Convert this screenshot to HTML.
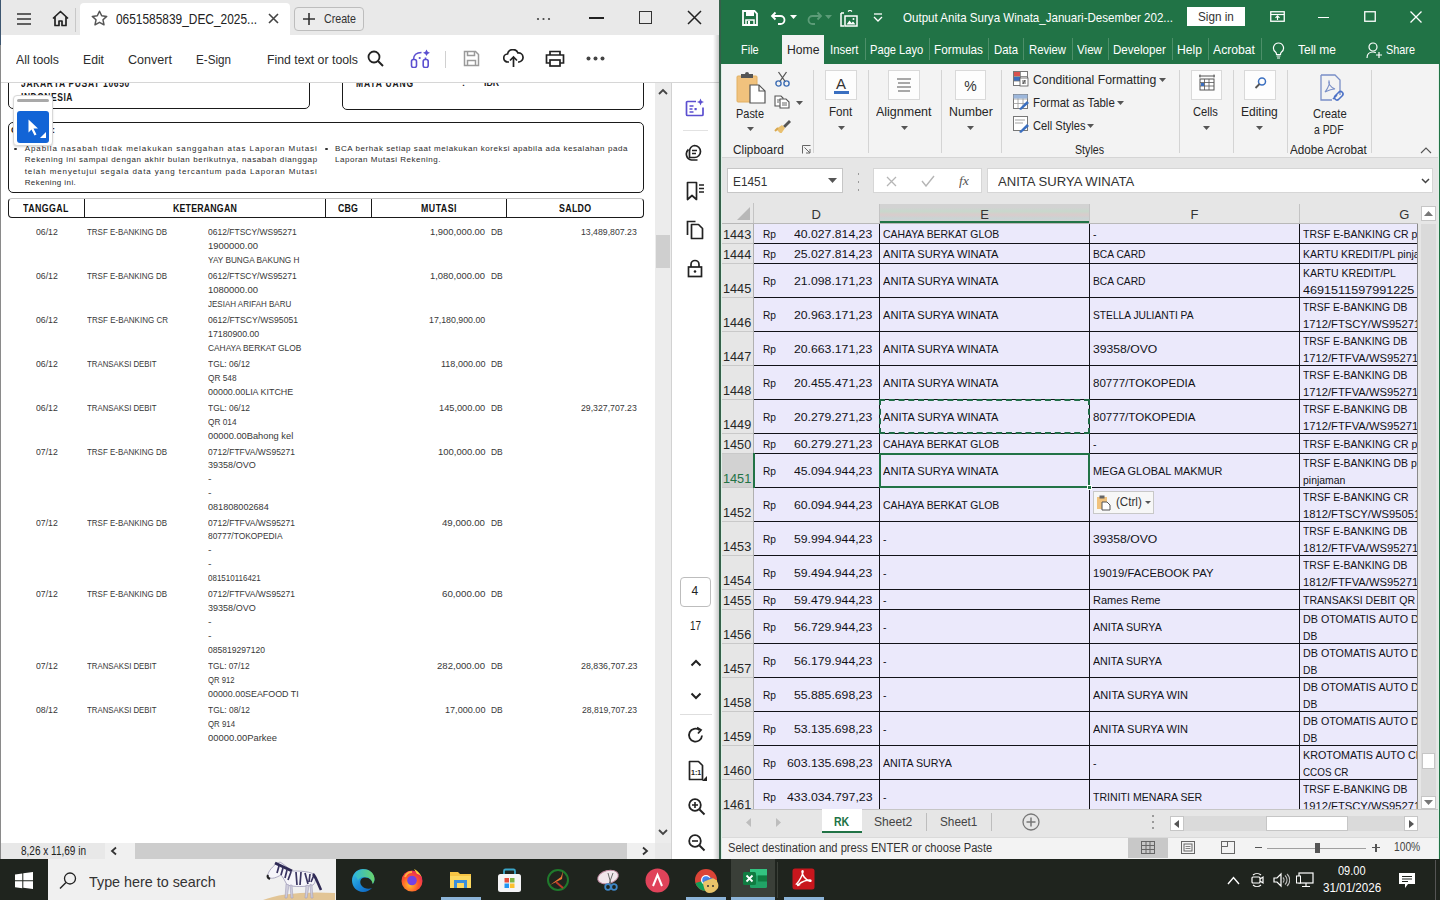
<!DOCTYPE html>
<html><head><meta charset="utf-8">
<style>
*{margin:0;padding:0;box-sizing:border-box}
html,body{width:1440px;height:900px;overflow:hidden;background:#fff;font-family:"Liberation Sans",sans-serif;color:#222}
.a{position:absolute}
.t{position:absolute;white-space:nowrap;line-height:1;transform-origin:0 50%}
</style></head><body>
<div id="acro" class="a" style="left:0;top:0;width:719px;height:860px;background:#fff;overflow:hidden"><div class="a" style="left:0;top:0;width:719px;height:35px;background:#e9e9e9"></div><svg class="a" style="left:16px;top:12px" width="16" height="14" viewBox="0 0 16 14"><path d="M1 2h14M1 7h14M1 12h14" stroke="#333" stroke-width="1.6"/></svg><svg class="a" style="left:51px;top:10px" width="19" height="17" viewBox="0 0 19 17"><path d="M2 8.5L9.5 1.5L17 8.5M4 7v8.5h4v-4.5h3v4.5h4V7" fill="none" stroke="#222" stroke-width="1.7" stroke-linejoin="round"/></svg><div class="a" style="left:75px;top:8px;width:1px;height:24px;background:#c8c8c8"></div><div class="a" style="left:80px;top:3px;width:210px;height:32px;background:#fff;border-radius:4px 4px 0 0"></div><svg class="a" style="left:91px;top:10px" width="17" height="17" viewBox="0 0 17 17"><path d="M8.5 1.2l2.2 4.6 5 .6-3.7 3.4 1 5-4.5-2.5-4.5 2.5 1-5L1.3 6.4l5-.6z" fill="none" stroke="#555" stroke-width="1.5" stroke-linejoin="round"/></svg><div class="t" style="left:116.00px;top:11.96px;font-size:14px;color:#222;transform:scaleX(0.8504);">0651585839_DEC_2025...</div><svg class="a" style="left:268px;top:13px" width="11" height="11" viewBox="0 0 11 11"><path d="M1 1l9 9M10 1l-9 9" stroke="#444" stroke-width="1.6"/></svg><div class="a" style="left:294px;top:7px;width:70px;height:24px;border:1px solid #bdbdbd;border-radius:4px;background:#ececec"></div><svg class="a" style="left:303px;top:13px" width="12" height="12" viewBox="0 0 12 12"><path d="M6 0v12M0 6h12" stroke="#333" stroke-width="1.6"/></svg><div class="t" style="left:324.00px;top:12.46px;font-size:13px;color:#333;transform:scaleX(0.8199);">Create</div><svg class="a" style="left:536px;top:17px" width="16" height="4" viewBox="0 0 16 4"><circle cx="2" cy="2" r="1.1" fill="#444"/><circle cx="7.5" cy="2" r="1.1" fill="#444"/><circle cx="13" cy="2" r="1.1" fill="#444"/></svg><div class="a" style="left:589px;top:17px;width:15px;height:1.5px;background:#222"></div><div class="a" style="left:639px;top:11px;width:13px;height:13px;border:1.5px solid #333"></div><svg class="a" style="left:687px;top:10px" width="15" height="15" viewBox="0 0 15 15"><path d="M1 1l13 13M14 1L1 14" stroke="#222" stroke-width="1.5"/></svg><div class="t" style="left:16.00px;top:52.96px;font-size:13px;color:#2c2c2c;transform:scaleX(0.9444);">All tools</div><div class="t" style="left:83.00px;top:52.96px;font-size:13px;color:#2c2c2c;transform:scaleX(0.9372);">Edit</div><div class="t" style="left:128.00px;top:52.96px;font-size:13px;color:#2c2c2c;transform:scaleX(0.9664);">Convert</div><div class="t" style="left:196.00px;top:52.96px;font-size:13px;color:#2c2c2c;transform:scaleX(0.8967);">E-Sign</div><div class="t" style="left:267.00px;top:52.96px;font-size:13px;color:#2c2c2c;transform:scaleX(0.9468);">Find text or tools</div><svg class="a" style="left:367px;top:50px" width="17" height="17" viewBox="0 0 17 17"><circle cx="7" cy="7" r="5.5" fill="none" stroke="#222" stroke-width="1.8"/><path d="M11 11l5 5" stroke="#222" stroke-width="1.9"/></svg><svg class="a" style="left:410px;top:49px" width="21" height="19" viewBox="0 0 21 19"><rect x="1.5" y="10.5" width="5" height="8" rx="2" fill="none" stroke="#5b4fd0" stroke-width="1.6"/><rect x="13.2" y="10.5" width="5" height="8" rx="2" fill="none" stroke="#5b4fd0" stroke-width="1.6"/><path d="M3.5 10.5C3.5 6 6.5 3.5 11.5 3.5" fill="none" stroke="#5b4fd0" stroke-width="1.6"/><path d="M15.5 8.5V10.5" stroke="#5b4fd0" stroke-width="1.6"/><path d="M16.5 0.5l1.2 2.2 2.3 1.1-2.3 1.1-1.2 2.2-1.2-2.2-2.3-1.1 2.3-1.1z" fill="#5b4fd0"/><circle cx="9.7" cy="9" r="1.1" fill="#5b4fd0"/></svg><div class="a" style="left:445px;top:51px;width:1px;height:17px;background:#d0d0d0"></div><svg class="a" style="left:463px;top:50px" width="17" height="17" viewBox="0 0 17 17"><path d="M1.5 1.5h11l3 3v11h-14z" fill="none" stroke="#9a9a9a" stroke-width="1.5"/><path d="M4.5 1.5v4h7v-4M4.5 15.5v-5h8v5" fill="none" stroke="#9a9a9a" stroke-width="1.5"/></svg><svg class="a" style="left:503px;top:49px" width="21" height="19" viewBox="0 0 21 19"><path d="M6 13H5a4 4 0 0 1-.5-8A5.5 5.5 0 0 1 15 4a4.5 4.5 0 0 1 1 9h-1" fill="none" stroke="#222" stroke-width="1.7"/><path d="M10.5 18V8M7 11.5l3.5-3.5 3.5 3.5" fill="none" stroke="#222" stroke-width="1.7"/></svg><svg class="a" style="left:545px;top:50px" width="20" height="18" viewBox="0 0 20 18"><path d="M5 5V1.5h10V5M5 13H1.5V5h17v8H15" fill="none" stroke="#222" stroke-width="1.7"/><rect x="5" y="10" width="10" height="6" fill="none" stroke="#222" stroke-width="1.7"/></svg><svg class="a" style="left:586px;top:56px" width="19" height="5" viewBox="0 0 19 5"><circle cx="2.5" cy="2.5" r="2" fill="#444"/><circle cx="9.5" cy="2.5" r="2" fill="#444"/><circle cx="16.5" cy="2.5" r="2" fill="#444"/></svg><div class="a" style="left:0;top:82px;width:719px;height:1px;background:#d6d6d6"></div><div class="a" style="left:0;top:83px;width:655px;height:760px;overflow:hidden;background:#fff"><div class="a" style="left:0;top:-83px;width:655px;height:900px"><div class="a" style="left:8px;top:40px;width:302px;height:69px;border:1.3px solid #1a1a1a;border-radius:5px"></div><div class="a" style="left:342px;top:40px;width:302px;height:70px;border:1.3px solid #1a1a1a;border-radius:5px"></div><div class="a" style="left:8px;top:122px;width:636px;height:71px;border:1.3px solid #1a1a1a;border-radius:5px"></div><div class="a" style="left:8px;top:198px;width:636px;height:20px;border:1.3px solid #1a1a1a;border-top-color:#c4c4c4;border-radius:4px"></div><div class="a" style="left:84px;top:198.5px;width:1.3px;height:19.5px;background:#1a1a1a"></div><div class="a" style="left:325px;top:198.5px;width:1.3px;height:19.5px;background:#1a1a1a"></div><div class="a" style="left:371px;top:198.5px;width:1.3px;height:19.5px;background:#1a1a1a"></div><div class="a" style="left:506px;top:198.5px;width:1.3px;height:19.5px;background:#1a1a1a"></div><div class="t" style="left:11.00px;top:126.47px;font-size:9px;color:#1a1a1a;font-weight:700;">C</div><div class="t" style="left:52.00px;top:126.47px;font-size:9px;color:#1a1a1a;font-weight:700;">:</div><div class="t" style="left:21.00px;top:78.77px;font-size:10px;color:#1a1a1a;font-weight:700;letter-spacing:0.792px;transform:scaleX(0.85);">JAKARTA PUSAT 10650</div><div class="t" style="left:21.00px;top:92.77px;font-size:10px;color:#1a1a1a;font-weight:700;letter-spacing:0.624px;transform:scaleX(0.85);">INDONESIA</div><div class="t" style="left:356.00px;top:78.77px;font-size:10px;color:#1a1a1a;font-weight:700;letter-spacing:0.998px;transform:scaleX(0.85);">MATA UANG</div><div class="t" style="left:462.00px;top:79.27px;font-size:9px;color:#1a1a1a;font-weight:700;">:</div><div class="t" style="left:484.00px;top:79.27px;font-size:9px;color:#1a1a1a;font-weight:700;transform:scaleX(0.9677);">IDR</div><div class="a" style="left:14px;top:147.5px;width:2.5px;height:2.5px;background:#333;border-radius:50%"></div><div class="a" style="left:325px;top:147.5px;width:2.5px;height:2.5px;background:#333;border-radius:50%"></div><div class="t" style="left:24.70px;top:144.58px;font-size:8px;color:#2a2a2a;letter-spacing:0.932px;">Apabila nasabah tidak melakukan sanggahan atas Laporan Mutasi</div><div class="t" style="left:24.70px;top:156.13px;font-size:8px;color:#2a2a2a;letter-spacing:0.616px;">Rekening ini sampai dengan akhir bulan berikutnya, nasabah dianggap</div><div class="t" style="left:24.70px;top:167.68px;font-size:8px;color:#2a2a2a;letter-spacing:0.895px;">telah menyetujui segala data yang tercantum pada Laporan Mutasi</div><div class="t" style="left:24.70px;top:179.28px;font-size:8px;color:#2a2a2a;letter-spacing:0.404px;">Rekening ini.</div><div class="t" style="left:335.00px;top:144.58px;font-size:8px;color:#2a2a2a;letter-spacing:0.576px;">BCA berhak setiap saat melakukan koreksi apabila ada kesalahan pada</div><div class="t" style="left:335.00px;top:155.78px;font-size:8px;color:#2a2a2a;letter-spacing:0.525px;">Laporan Mutasi Rekening.</div><div class="t" style="left:23.35px;top:203.67px;font-size:10px;color:#111;font-weight:700;letter-spacing:0.461px;transform:scaleX(0.88);">TANGGAL</div><div class="t" style="left:173.00px;top:203.67px;font-size:10px;color:#111;font-weight:700;letter-spacing:0.216px;transform:scaleX(0.88);">KETERANGAN</div><div class="t" style="left:338.00px;top:203.67px;font-size:10px;color:#111;font-weight:700;letter-spacing:0.164px;transform:scaleX(0.88);">CBG</div><div class="t" style="left:420.75px;top:203.67px;font-size:10px;color:#111;font-weight:700;letter-spacing:0.553px;transform:scaleX(0.88);">MUTASI</div><div class="t" style="left:558.75px;top:203.67px;font-size:10px;color:#111;font-weight:700;letter-spacing:0.386px;transform:scaleX(0.88);">SALDO</div><div class="t" style="left:36.00px;top:226.62px;font-size:9.4px;color:#383838;transform:scaleX(0.9268);">06/12</div><div class="t" style="left:87.00px;top:226.62px;font-size:9.4px;color:#383838;transform:scaleX(0.8485);">TRSF E-BANKING DB</div><div class="t" style="left:208.00px;top:226.62px;font-size:9.4px;color:#383838;transform:scaleX(0.9059);">0612/FTSCY/WS95271</div><div class="t" style="left:208.00px;top:240.62px;font-size:9.4px;color:#383838;transform:scaleX(1.0095);">1900000.00</div><div class="t" style="left:208.00px;top:254.62px;font-size:9.4px;color:#383838;transform:scaleX(0.8781);">YAY BUNGA BAKUNG H</div><div class="t" style="left:430.00px;top:226.62px;font-size:9.4px;color:#383838;transform:scaleX(1.0046);">1,900,000.00</div><div class="t" style="left:491.25px;top:226.62px;font-size:9.4px;color:#383838;transform:scaleX(0.9017);">DB</div><div class="t" style="left:581.25px;top:226.62px;font-size:9.4px;color:#383838;transform:scaleX(0.9297);">13,489,807.23</div><div class="t" style="left:36.00px;top:270.62px;font-size:9.4px;color:#383838;transform:scaleX(0.9268);">06/12</div><div class="t" style="left:87.00px;top:270.62px;font-size:9.4px;color:#383838;transform:scaleX(0.8485);">TRSF E-BANKING DB</div><div class="t" style="left:208.00px;top:270.62px;font-size:9.4px;color:#383838;transform:scaleX(0.9059);">0612/FTSCY/WS95271</div><div class="t" style="left:208.00px;top:284.62px;font-size:9.4px;color:#383838;transform:scaleX(1.0095);">1080000.00</div><div class="t" style="left:208.00px;top:298.62px;font-size:9.4px;color:#383838;transform:scaleX(0.8545);">JESIAH ARIFAH BARU</div><div class="t" style="left:430.00px;top:270.62px;font-size:9.4px;color:#383838;transform:scaleX(1.0046);">1,080,000.00</div><div class="t" style="left:491.25px;top:270.62px;font-size:9.4px;color:#383838;transform:scaleX(0.9017);">DB</div><div class="t" style="left:36.00px;top:314.62px;font-size:9.4px;color:#383838;transform:scaleX(0.9268);">06/12</div><div class="t" style="left:87.00px;top:314.62px;font-size:9.4px;color:#383838;transform:scaleX(0.8543);">TRSF E-BANKING CR</div><div class="t" style="left:208.00px;top:314.62px;font-size:9.4px;color:#383838;transform:scaleX(0.9187);">0612/FTSCY/WS95051</div><div class="t" style="left:208.00px;top:328.62px;font-size:9.4px;color:#383838;transform:scaleX(0.9361);">17180900.00</div><div class="t" style="left:208.00px;top:342.62px;font-size:9.4px;color:#383838;transform:scaleX(0.8919);">CAHAYA BERKAT GLOB</div><div class="t" style="left:428.75px;top:314.62px;font-size:9.4px;color:#383838;transform:scaleX(0.9380);">17,180,900.00</div><div class="t" style="left:36.00px;top:358.62px;font-size:9.4px;color:#383838;transform:scaleX(0.9268);">06/12</div><div class="t" style="left:87.00px;top:358.62px;font-size:9.4px;color:#383838;transform:scaleX(0.8337);">TRANSAKSI DEBIT</div><div class="t" style="left:208.00px;top:358.62px;font-size:9.4px;color:#383838;transform:scaleX(0.8954);">TGL: 06/12</div><div class="t" style="left:208.00px;top:372.62px;font-size:9.4px;color:#383838;transform:scaleX(0.8820);">QR 548</div><div class="t" style="left:208.00px;top:386.62px;font-size:9.4px;color:#383838;transform:scaleX(0.9510);">00000.00LIA KITCHE</div><div class="t" style="left:440.50px;top:358.62px;font-size:9.4px;color:#383838;transform:scaleX(0.9625);">118,000.00</div><div class="t" style="left:491.25px;top:358.62px;font-size:9.4px;color:#383838;transform:scaleX(0.9017);">DB</div><div class="t" style="left:36.00px;top:402.62px;font-size:9.4px;color:#383838;transform:scaleX(0.9268);">06/12</div><div class="t" style="left:87.00px;top:402.62px;font-size:9.4px;color:#383838;transform:scaleX(0.8337);">TRANSAKSI DEBIT</div><div class="t" style="left:208.00px;top:402.62px;font-size:9.4px;color:#383838;transform:scaleX(0.8954);">TGL: 06/12</div><div class="t" style="left:208.00px;top:416.62px;font-size:9.4px;color:#383838;transform:scaleX(0.8820);">QR 014</div><div class="t" style="left:208.00px;top:430.62px;font-size:9.4px;color:#383838;transform:scaleX(0.9911);">00000.00Bahong kel</div><div class="t" style="left:438.75px;top:402.62px;font-size:9.4px;color:#383838;transform:scaleX(0.9857);">145,000.00</div><div class="t" style="left:491.25px;top:402.62px;font-size:9.4px;color:#383838;transform:scaleX(0.9017);">DB</div><div class="t" style="left:581.25px;top:402.62px;font-size:9.4px;color:#383838;transform:scaleX(0.9297);">29,327,707.23</div><div class="t" style="left:36.00px;top:446.62px;font-size:9.4px;color:#383838;transform:scaleX(0.9268);">07/12</div><div class="t" style="left:87.00px;top:446.62px;font-size:9.4px;color:#383838;transform:scaleX(0.8485);">TRSF E-BANKING DB</div><div class="t" style="left:208.00px;top:446.62px;font-size:9.4px;color:#383838;transform:scaleX(0.9040);">0712/FTFVA/WS95271</div><div class="t" style="left:208.00px;top:460.47px;font-size:9.4px;color:#383838;transform:scaleX(0.9643);">39358/OVO</div><div class="t" style="left:208.00px;top:474.32px;font-size:9.4px;color:#383838;transform:scaleX(1.1200);">-</div><div class="t" style="left:208.00px;top:488.17px;font-size:9.4px;color:#383838;transform:scaleX(1.1200);">-</div><div class="t" style="left:208.00px;top:502.02px;font-size:9.4px;color:#383838;transform:scaleX(0.9708);">081808002684</div><div class="t" style="left:437.50px;top:446.62px;font-size:9.4px;color:#383838;transform:scaleX(1.0123);">100,000.00</div><div class="t" style="left:491.25px;top:446.62px;font-size:9.4px;color:#383838;transform:scaleX(0.9017);">DB</div><div class="t" style="left:36.00px;top:517.62px;font-size:9.4px;color:#383838;transform:scaleX(0.9268);">07/12</div><div class="t" style="left:87.00px;top:517.62px;font-size:9.4px;color:#383838;transform:scaleX(0.8485);">TRSF E-BANKING DB</div><div class="t" style="left:208.00px;top:517.62px;font-size:9.4px;color:#383838;transform:scaleX(0.9040);">0712/FTFVA/WS95271</div><div class="t" style="left:208.00px;top:531.47px;font-size:9.4px;color:#383838;transform:scaleX(0.8954);">80777/TOKOPEDIA</div><div class="t" style="left:208.00px;top:545.32px;font-size:9.4px;color:#383838;transform:scaleX(1.1200);">-</div><div class="t" style="left:208.00px;top:559.17px;font-size:9.4px;color:#383838;transform:scaleX(1.1200);">-</div><div class="t" style="left:208.00px;top:573.02px;font-size:9.4px;color:#383838;transform:scaleX(0.8525);">081510116421</div><div class="t" style="left:442.00px;top:517.62px;font-size:9.4px;color:#383838;transform:scaleX(1.0307);">49,000.00</div><div class="t" style="left:491.25px;top:517.62px;font-size:9.4px;color:#383838;transform:scaleX(0.9017);">DB</div><div class="t" style="left:36.00px;top:589.37px;font-size:9.4px;color:#383838;transform:scaleX(0.9268);">07/12</div><div class="t" style="left:87.00px;top:589.37px;font-size:9.4px;color:#383838;transform:scaleX(0.8485);">TRSF E-BANKING DB</div><div class="t" style="left:208.00px;top:589.37px;font-size:9.4px;color:#383838;transform:scaleX(0.9040);">0712/FTFVA/WS95271</div><div class="t" style="left:208.00px;top:603.22px;font-size:9.4px;color:#383838;transform:scaleX(0.9643);">39358/OVO</div><div class="t" style="left:208.00px;top:617.07px;font-size:9.4px;color:#383838;transform:scaleX(1.1200);">-</div><div class="t" style="left:208.00px;top:630.92px;font-size:9.4px;color:#383838;transform:scaleX(1.1200);">-</div><div class="t" style="left:208.00px;top:644.77px;font-size:9.4px;color:#383838;transform:scaleX(0.9109);">085819297120</div><div class="t" style="left:441.50px;top:589.37px;font-size:9.4px;color:#383838;transform:scaleX(1.0427);">60,000.00</div><div class="t" style="left:491.25px;top:589.37px;font-size:9.4px;color:#383838;transform:scaleX(0.9017);">DB</div><div class="t" style="left:36.00px;top:661.37px;font-size:9.4px;color:#383838;transform:scaleX(0.9268);">07/12</div><div class="t" style="left:87.00px;top:661.37px;font-size:9.4px;color:#383838;transform:scaleX(0.8337);">TRANSAKSI DEBIT</div><div class="t" style="left:208.00px;top:661.37px;font-size:9.4px;color:#383838;transform:scaleX(0.8847);">TGL: 07/12</div><div class="t" style="left:208.00px;top:675.37px;font-size:9.4px;color:#383838;transform:scaleX(0.8201);">QR 912</div><div class="t" style="left:208.00px;top:689.37px;font-size:9.4px;color:#383838;transform:scaleX(0.9481);">00000.00SEAFOOD TI</div><div class="t" style="left:437.00px;top:661.37px;font-size:9.4px;color:#383838;transform:scaleX(1.0230);">282,000.00</div><div class="t" style="left:491.25px;top:661.37px;font-size:9.4px;color:#383838;transform:scaleX(0.9017);">DB</div><div class="t" style="left:580.50px;top:661.37px;font-size:9.4px;color:#383838;transform:scaleX(0.9422);">28,836,707.23</div><div class="t" style="left:36.00px;top:705.37px;font-size:9.4px;color:#383838;transform:scaleX(0.9268);">08/12</div><div class="t" style="left:87.00px;top:705.37px;font-size:9.4px;color:#383838;transform:scaleX(0.8337);">TRANSAKSI DEBIT</div><div class="t" style="left:208.00px;top:705.37px;font-size:9.4px;color:#383838;transform:scaleX(0.8954);">TGL: 08/12</div><div class="t" style="left:208.00px;top:719.37px;font-size:9.4px;color:#383838;transform:scaleX(0.8356);">QR 914</div><div class="t" style="left:208.00px;top:733.37px;font-size:9.4px;color:#383838;transform:scaleX(1.0027);">00000.00Parkee</div><div class="t" style="left:444.50px;top:705.37px;font-size:9.4px;color:#383838;transform:scaleX(0.9708);">17,000.00</div><div class="t" style="left:491.25px;top:705.37px;font-size:9.4px;color:#383838;transform:scaleX(0.9017);">DB</div><div class="t" style="left:582.00px;top:705.37px;font-size:9.4px;color:#383838;transform:scaleX(0.9171);">28,819,707.23</div></div></div><div class="a" style="left:13px;top:95px;width:40px;height:51px;background:#fff;border:1px solid #d8d8d8;border-radius:4px;box-shadow:0 1px 2px rgba(0,0,0,.15)"></div><div class="a" style="left:17px;top:99px;width:32px;height:3px;background:#a9a9a9;border-radius:2px"></div><div class="a" style="left:17px;top:111px;width:32px;height:32px;background:#1264d6;border-radius:3px"></div><svg class="a" style="left:27px;top:118px" width="20" height="22" viewBox="0 0 20 22"><path d="M1.5 1.5v13l3-3 3 6 2-1-3-6h4.5z" fill="#fff"/><path d="M19 14v6h-6z" fill="#fff"/></svg><div class="a" style="left:655px;top:83px;width:16px;height:760px;background:#ececec"></div><svg class="a" style="left:658px;top:88px" width="10" height="7" viewBox="0 0 10 7"><path d="M1 6l4-4 4 4" fill="none" stroke="#444" stroke-width="1.8"/></svg><div class="a" style="left:655.5px;top:234.5px;width:14px;height:33px;background:#cfcfcf"></div><svg class="a" style="left:658px;top:829px" width="10" height="7" viewBox="0 0 10 7"><path d="M1 1l4 4 4-4" fill="none" stroke="#444" stroke-width="1.8"/></svg><div class="a" style="left:671px;top:83px;width:1px;height:777px;background:#d2d2d2"></div><svg class="a" style="left:685px;top:98px" width="20" height="19" viewBox="0 0 20 19"><path d="M11 3.5H2.5a1 1 0 0 0-1 1V16.5a1 1 0 0 0 1 1H17a1 1 0 0 0 1-1V9.5" fill="none" stroke="#5b4fd0" stroke-width="1.7"/><path d="M4.5 8h4M4.5 11h3M4.5 14h4" stroke="#5b4fd0" stroke-width="1.5"/><rect x="9.5" y="10" width="2.2" height="2.2" fill="#5b4fd0"/><path d="M15.5 0.5l1.1 2.4 2.4 1.1-2.4 1.1-1.1 2.4-1.1-2.4-2.4-1.1 2.4-1.1z" fill="#5b4fd0"/></svg><div class="a" style="left:683px;top:130px;width:25px;height:1px;background:#e2e2e2"></div><svg class="a" style="left:685px;top:143px" width="19" height="19" viewBox="0 0 19 19"><path d="M9.5 2.5a6 6 0 1 1 0 12H4.5V8.5a6 6 0 0 1 5-6z" fill="none" stroke="#222" stroke-width="1.7"/><path d="M7 7.5h5M7 10.5h4" stroke="#222" stroke-width="1.5"/><path d="M3.5 6.5a6 6 0 0 0 3 10.5h6" fill="none" stroke="#222" stroke-width="1.7"/></svg><svg class="a" style="left:686px;top:181px" width="19" height="20" viewBox="0 0 19 20"><path d="M1.5 1.5h9v17l-4.5-4-4.5 4z" fill="none" stroke="#222" stroke-width="1.7" stroke-linejoin="round"/><path d="M13 4h5M13 7.5h5M13 11h5" stroke="#222" stroke-width="1.5"/></svg><svg class="a" style="left:686px;top:220px" width="18" height="20" viewBox="0 0 18 20"><path d="M5.5 4.5h7l4 4v10h-11z" fill="none" stroke="#222" stroke-width="1.7" stroke-linejoin="round"/><path d="M1.5 15V1.5h8" fill="none" stroke="#222" stroke-width="1.7"/></svg><svg class="a" style="left:687px;top:259px" width="16" height="19" viewBox="0 0 16 19"><rect x="1.5" y="8" width="13" height="9.5" fill="none" stroke="#222" stroke-width="1.7"/><path d="M4 8V5.5a4 4 0 0 1 8 0V8" fill="none" stroke="#222" stroke-width="1.7"/><circle cx="8" cy="12.5" r="1.3" fill="#222"/></svg><div class="a" style="left:679.5px;top:576.5px;width:31px;height:30.5px;border:1px solid #bdbdbd;border-radius:4px"></div><div class="t" style="left:691.41px;top:585.46px;font-size:12px;color:#222;">4</div><div class="t" style="left:690.25px;top:620.46px;font-size:12px;color:#222;transform:scaleX(0.8234);">17</div><svg class="a" style="left:690px;top:659px" width="12" height="8" viewBox="0 0 12 8"><path d="M1.5 6.5l4.5-4.5 4.5 4.5" fill="none" stroke="#222" stroke-width="2"/></svg><svg class="a" style="left:690px;top:692px" width="12" height="8" viewBox="0 0 12 8"><path d="M1.5 1.5l4.5 4.5 4.5-4.5" fill="none" stroke="#222" stroke-width="2"/></svg><div class="a" style="left:680px;top:714px;width:32px;height:1px;background:#dedede"></div><svg class="a" style="left:687px;top:726px" width="18" height="18" viewBox="0 0 18 18"><path d="M15 9.5A6.5 6.5 0 1 1 12.5 4" fill="none" stroke="#222" stroke-width="1.8"/><path d="M10 1.5l4 2.5-3 3.5" fill="none" stroke="#222" stroke-width="1.8"/></svg><svg class="a" style="left:688px;top:760px" width="20" height="22" viewBox="0 0 20 22"><path d="M1.5 1.5h9l4 4v14h-13z" fill="none" stroke="#222" stroke-width="1.7" stroke-linejoin="round"/><text x="3" y="15" font-size="7" font-family="Liberation Sans" font-weight="700" fill="#222">1:1</text><path d="M19 16v5h-5z" fill="#222"/></svg><svg class="a" style="left:688px;top:798px" width="18" height="18" viewBox="0 0 18 18"><circle cx="7" cy="7" r="5.8" fill="none" stroke="#222" stroke-width="1.8"/><path d="M11.5 11.5l5 5" stroke="#222" stroke-width="2"/><path d="M7 4v6M4 7h6" stroke="#222" stroke-width="1.6"/></svg><svg class="a" style="left:688px;top:834px" width="18" height="18" viewBox="0 0 18 18"><circle cx="7" cy="7" r="5.8" fill="none" stroke="#222" stroke-width="1.8"/><path d="M11.5 11.5l5 5" stroke="#222" stroke-width="2"/><path d="M4 7h6" stroke="#222" stroke-width="1.6"/></svg><div class="a" style="left:0;top:843px;width:671px;height:16px;background:#e8e8e8"></div><div class="a" style="left:105px;top:843px;width:30px;height:16px;background:#f0f0f0"></div><div class="a" style="left:135px;top:843px;width:492px;height:16px;background:#cdcdcd"></div><div class="a" style="left:627px;top:843px;width:28px;height:16px;background:#f0f0f0"></div><div class="t" style="left:21.00px;top:844.96px;font-size:12px;color:#222;transform:scaleX(0.8350);">8,26 x 11,69 in</div><svg class="a" style="left:110px;top:846px" width="8" height="10" viewBox="0 0 8 10"><path d="M6 1.5L2 5l4 3.5" fill="none" stroke="#333" stroke-width="1.8"/></svg><svg class="a" style="left:641px;top:846px" width="8" height="10" viewBox="0 0 8 10"><path d="M2 1.5L6 5l-4 3.5" fill="none" stroke="#333" stroke-width="1.8"/></svg><div class="a" style="left:0;top:0;width:1px;height:860px;background:#8a8a8a"></div><div class="a" style="left:0;top:0;width:1px;height:45px;background:#3d5670"></div><div class="a" style="left:713px;top:35px;width:6px;height:824px;background:linear-gradient(90deg,rgba(0,0,0,0),rgba(0,0,0,.2))"></div></div><div id="xl" class="a" style="left:719px;top:0;width:721px;height:860px;background:#217346;overflow:hidden"><svg class="a" style="left:23px;top:10px;" width="16" height="16" viewBox="0 0 16 16"><path d="M1 1h11.5l2.5 2.5V15H1z" fill="none" stroke="#fff" stroke-width="1.8"/><rect x="4" y="1" width="8" height="5" fill="#fff"/><rect x="4" y="10" width="8" height="5" fill="none" stroke="#fff" stroke-width="1.5"/><rect x="6" y="11" width="2" height="4" fill="#fff"/></svg><svg class="a" style="left:51px;top:11px;" width="17" height="14" viewBox="0 0 17 14"><path d="M2 5h8.5a4 4 0 0 1 0 8H8" fill="none" stroke="#fff" stroke-width="1.8"/><path d="M5.5 1.5L2 5l3.5 3.5" fill="none" stroke="#fff" stroke-width="1.8"/></svg><svg class="a" style="left:71px;top:15px;" width="7" height="4" viewBox="0 0 7 4"><path d="M0 0h7L3.5 4z" fill="#fff"/></svg><svg class="a" style="left:87px;top:11px;" width="17" height="14" viewBox="0 0 17 14"><path d="M15 5H6.5a4 4 0 0 0 0 8H9" fill="none" stroke="#5c9c78" stroke-width="1.8"/><path d="M11.5 1.5L15 5l-3.5 3.5" fill="none" stroke="#5c9c78" stroke-width="1.8"/></svg><svg class="a" style="left:106px;top:15px;" width="7" height="4" viewBox="0 0 7 4"><path d="M0 0h7L3.5 4z" fill="#5c9c78"/></svg><svg class="a" style="left:121px;top:10px;" width="18" height="17" viewBox="0 0 18 17"><path d="M1 3v13h3M4 3H1" fill="none" stroke="#fff" stroke-width="1.5"/><rect x="5" y="6" width="12" height="10" fill="none" stroke="#fff" stroke-width="1.5"/><path d="M6.5 14.5l3-4 2 2.5 1.5-1.5 2.5 3z" fill="#fff"/><circle cx="13.5" cy="9" r="1" fill="#fff"/><path d="M8 1.5l2-1.5 2 1.5" fill="none" stroke="#fff" stroke-width="1.3"/></svg><svg class="a" style="left:154px;top:13px;" width="10" height="10" viewBox="0 0 10 10"><path d="M1 1h8" stroke="#fff" stroke-width="1.3"/><path d="M1 4l4 4 4-4" fill="none" stroke="#fff" stroke-width="1.3"/></svg><div class="t" style="left:183.50px;top:11.16px;font-size:13px;color:#fff;transform:scaleX(0.8896);">Output Anita Surya Winata_Januari-Desember 202...</div><div class="a" style="left:468px;top:7px;width:58px;height:19px;background:#fff;"></div><div class="t" style="left:479.00px;top:10.26px;font-size:13px;color:#333;transform:scaleX(0.8994);">Sign in</div><svg class="a" style="left:551px;top:11px;" width="15" height="11" viewBox="0 0 15 11"><rect x="0.75" y="0.75" width="13.5" height="9.5" fill="none" stroke="#fff" stroke-width="1.3"/><path d="M0.75 3.5h13.5" stroke="#fff" stroke-width="1.2"/><path d="M7.5 9V5M5.5 6.8l2-2 2 2" fill="none" stroke="#fff" stroke-width="1.2"/></svg><div class="a" style="left:599px;top:16.5px;width:11px;height:1.3px;background:#fff;"></div><svg class="a" style="left:645px;top:11px;" width="12" height="11" viewBox="0 0 12 11"><rect x="0.75" y="0.75" width="10.5" height="9.5" fill="none" stroke="#fff" stroke-width="1.3"/></svg><svg class="a" style="left:691px;top:11px;" width="12" height="12" viewBox="0 0 12 12"><path d="M0.5 0.5l11 11M11.5 0.5l-11 11" stroke="#fff" stroke-width="1.3"/></svg><div class="a" style="left:63px;top:35px;width:42px;height:29px;background:#f3f3f3;"></div><div class="t" style="left:22.30px;top:43.16px;font-size:13px;color:#fff;transform:scaleX(0.8447);">File</div><div class="t" style="left:111.30px;top:43.16px;font-size:13px;color:#fff;transform:scaleX(0.8765);">Insert</div><div class="t" style="left:150.50px;top:43.16px;font-size:13px;color:#fff;transform:scaleX(0.8573);">Page Layo</div><div class="t" style="left:215.00px;top:43.16px;font-size:13px;color:#fff;transform:scaleX(0.9043);">Formulas</div><div class="t" style="left:275.00px;top:43.16px;font-size:13px;color:#fff;transform:scaleX(0.8737);">Data</div><div class="t" style="left:310.00px;top:43.16px;font-size:13px;color:#fff;transform:scaleX(0.8680);">Review</div><div class="t" style="left:358.00px;top:43.16px;font-size:13px;color:#fff;transform:scaleX(0.8944);">View</div><div class="t" style="left:394.00px;top:43.16px;font-size:13px;color:#fff;transform:scaleX(0.8901);">Developer</div><div class="t" style="left:458.00px;top:43.16px;font-size:13px;color:#fff;transform:scaleX(0.9346);">Help</div><div class="t" style="left:494.00px;top:43.16px;font-size:13px;color:#fff;transform:scaleX(0.9372);">Acrobat</div><div class="t" style="left:579.00px;top:43.16px;font-size:13px;color:#fff;transform:scaleX(0.9226);">Tell me</div><div class="t" style="left:667.00px;top:43.16px;font-size:13px;color:#fff;transform:scaleX(0.8357);">Share</div><div class="t" style="left:67.70px;top:43.16px;font-size:13px;color:#262626;transform:scaleX(0.9369);">Home</div><div class="a" style="left:145.70000000000005px;top:38px;width:1px;height:22px;background:#4d8f69;"></div><div class="a" style="left:209.79999999999995px;top:38px;width:1px;height:22px;background:#4d8f69;"></div><div class="a" style="left:269px;top:38px;width:1px;height:22px;background:#4d8f69;"></div><div class="a" style="left:304px;top:38px;width:1px;height:22px;background:#4d8f69;"></div><div class="a" style="left:353px;top:38px;width:1px;height:22px;background:#4d8f69;"></div><div class="a" style="left:388.5px;top:38px;width:1px;height:22px;background:#4d8f69;"></div><div class="a" style="left:452.75px;top:38px;width:1px;height:22px;background:#4d8f69;"></div><div class="a" style="left:488.5px;top:38px;width:1px;height:22px;background:#4d8f69;"></div><div class="a" style="left:541.5px;top:38px;width:1px;height:22px;background:#4d8f69;"></div><svg class="a" style="left:553px;top:42px;" width="13" height="17" viewBox="0 0 13 17"><path d="M6.5 1a5 5 0 0 0-3 9c.8.7 1 1.5 1 2.5h4c0-1 .2-1.8 1-2.5a5 5 0 0 0-3-9z" fill="none" stroke="#fff" stroke-width="1.2"/><path d="M4.5 14h4M5 16h3" stroke="#fff" stroke-width="1.2"/></svg><svg class="a" style="left:647px;top:42px;" width="17" height="17" viewBox="0 0 17 17"><circle cx="7" cy="5" r="4" fill="none" stroke="#fff" stroke-width="1.2"/><path d="M1 16c0-4 2.5-6 6-6 1 0 2 .2 2.8.6" fill="none" stroke="#fff" stroke-width="1.2"/><path d="M13 10v6M10 13h6" stroke="#fff" stroke-width="1.2"/></svg><div class="a" style="left:1px;top:64px;width:720px;height:93px;background:#f3f3f3;"></div><div class="a" style="left:1px;top:157px;width:720px;height:1px;background:#d5d5d5;"></div><svg class="a" style="left:17px;top:71px;" width="32" height="33" viewBox="0 0 32 33"><rect x="1" y="5" width="20" height="26" rx="1" fill="#f1c27d"/><rect x="1" y="5" width="20" height="26" rx="1" fill="none" stroke="#e2b062" stroke-width="1"/><path d="M5 3h12v4H5z" fill="#555"/><circle cx="11" cy="3" r="2" fill="#555"/><path d="M14 14h9l6 6v12H14z" fill="#fff" stroke="#555" stroke-width="1.2"/><path d="M23 14v6h6" fill="none" stroke="#555" stroke-width="1.2"/></svg><div class="t" style="left:17.00px;top:107.21px;font-size:13px;color:#262626;transform:scaleX(0.8421);">Paste</div><svg class="a" style="left:28px;top:127px;" width="7" height="4" viewBox="0 0 7 4"><path d="M0 0h7L3.5 4z" fill="#555"/></svg><svg class="a" style="left:56px;top:71px;" width="15" height="16" viewBox="0 0 15 16"><path d="M3.5 1l7 10M11.5 1l-7 10" stroke="#555" stroke-width="1.3"/><circle cx="3.5" cy="12.5" r="2.6" fill="none" stroke="#3f6fb5" stroke-width="1.4"/><circle cx="11.5" cy="12.5" r="2.6" fill="none" stroke="#3f6fb5" stroke-width="1.4"/></svg><svg class="a" style="left:55px;top:95px;" width="16" height="14" viewBox="0 0 16 14"><path d="M1 1h6l2 2v8H1z" fill="#fff" stroke="#555" stroke-width="1.1"/><path d="M6 4h6l3 3v6H6z" fill="#fff" stroke="#555" stroke-width="1.1"/><path d="M8 8h5M8 10h5M3 5h3M3 7h2" stroke="#555" stroke-width="0.9"/></svg><svg class="a" style="left:77px;top:101px;" width="7" height="4" viewBox="0 0 7 4"><path d="M0 0h7L3.5 4z" fill="#555"/></svg><svg class="a" style="left:55px;top:117px;" width="17" height="16" viewBox="0 0 17 16"><path d="M9 9l6-6 2 2-6 6z" fill="#555"/><path d="M2 12l6-4 3 3-4 6z" fill="#e9c070"/><path d="M1 14l3-3" stroke="#d8a850" stroke-width="2"/></svg><div class="t" style="left:14.00px;top:142.71px;font-size:13px;color:#262626;transform:scaleX(0.9118);">Clipboard</div><svg class="a" style="left:83px;top:145px;" width="9" height="9" viewBox="0 0 9 9"><path d="M0.5 8.5V0.5h8" fill="none" stroke="#666" stroke-width="1"/><path d="M2.5 2.5l5.5 5.5M8 4v4H4" fill="none" stroke="#666" stroke-width="1"/></svg><div class="a" style="left:94.25px;top:70px;width:1px;height:83px;background:#d4d4d4;"></div><div class="a" style="left:148.5px;top:70px;width:1px;height:83px;background:#d4d4d4;"></div><div class="a" style="left:221.5px;top:70px;width:1px;height:83px;background:#d4d4d4;"></div><div class="a" style="left:282.25px;top:70px;width:1px;height:83px;background:#d4d4d4;"></div><div class="a" style="left:459.75px;top:70px;width:1px;height:83px;background:#d4d4d4;"></div><div class="a" style="left:513.5px;top:70px;width:1px;height:83px;background:#d4d4d4;"></div><div class="a" style="left:567.75px;top:70px;width:1px;height:83px;background:#d4d4d4;"></div><div class="a" style="left:651.5px;top:70px;width:1px;height:83px;background:#d4d4d4;"></div><div class="a" style="left:106px;top:69.5px;width:32px;height:30px;background:#fdfdfd;border:1px solid #d9d9d9"></div><svg class="a" style="left:106px;top:69px;" width="32" height="31" viewBox="0 0 32 31"><text x="16" y="20" text-anchor="middle" font-family="Liberation Sans" font-size="15" fill="#333">A</text><rect x="9" y="22" width="15" height="3" fill="#3a6fc0"/></svg><div class="t" style="left:110.25px;top:105.21px;font-size:13px;color:#262626;transform:scaleX(0.8937);">Font</div><svg class="a" style="left:118.5px;top:126px;" width="7" height="4" viewBox="0 0 7 4"><path d="M0 0h7L3.5 4z" fill="#555"/></svg><div class="a" style="left:169px;top:69.5px;width:32px;height:30px;background:#fdfdfd;border:1px solid #d9d9d9"></div><svg class="a" style="left:169px;top:69px;" width="32" height="31" viewBox="0 0 32 31"><path d="M9 10h14M10 14h12M9 18h14M10 22h12" stroke="#555" stroke-width="1.1"/></svg><div class="t" style="left:157.25px;top:105.21px;font-size:13px;color:#262626;transform:scaleX(0.9600);">Alignment</div><svg class="a" style="left:181.5px;top:126px;" width="7" height="4" viewBox="0 0 7 4"><path d="M0 0h7L3.5 4z" fill="#555"/></svg><div class="a" style="left:236px;top:69.5px;width:31.25px;height:30px;background:#fdfdfd;border:1px solid #d9d9d9"></div><svg class="a" style="left:236px;top:69px;" width="31.25" height="31" viewBox="0 0 31.25 31"><text x="15.6" y="22" text-anchor="middle" font-family="Liberation Sans" font-size="14" fill="#333">%</text></svg><div class="t" style="left:230.25px;top:105.21px;font-size:13px;color:#262626;transform:scaleX(0.9459);">Number</div><svg class="a" style="left:248.125px;top:126px;" width="7" height="4" viewBox="0 0 7 4"><path d="M0 0h7L3.5 4z" fill="#555"/></svg><div class="a" style="left:471.5px;top:69.5px;width:31.5px;height:30px;background:#fdfdfd;border:1px solid #d9d9d9"></div><svg class="a" style="left:471.5px;top:69px;" width="31.5" height="31" viewBox="0 0 31.5 31"><rect x="9" y="10" width="14" height="11" fill="#fff" stroke="#555" stroke-width="1"/><path d="M9 13.5h14M9 17h14M13.5 10v11M18 10v11" stroke="#555" stroke-width="0.8"/><rect x="10" y="14" width="3" height="3" fill="#3a6fc0"/><path d="M8 7h16M9 5.5v3M23 5.5v3" stroke="#555" stroke-width="1"/></svg><div class="t" style="left:474.25px;top:105.21px;font-size:13px;color:#262626;transform:scaleX(0.8562);">Cells</div><svg class="a" style="left:483.75px;top:126px;" width="7" height="4" viewBox="0 0 7 4"><path d="M0 0h7L3.5 4z" fill="#555"/></svg><div class="a" style="left:525.25px;top:69.5px;width:31.25px;height:30px;background:#fdfdfd;border:1px solid #d9d9d9"></div><svg class="a" style="left:525.25px;top:69px;" width="31.25" height="31" viewBox="0 0 31.25 31"><circle cx="18" cy="12.5" r="3.5" fill="none" stroke="#3a6fc0" stroke-width="1.5"/><path d="M15.5 15l-4 4" stroke="#555" stroke-width="1.8"/></svg><div class="t" style="left:522.25px;top:105.21px;font-size:13px;color:#262626;transform:scaleX(0.9245);">Editing</div><svg class="a" style="left:537.375px;top:126px;" width="7" height="4" viewBox="0 0 7 4"><path d="M0 0h7L3.5 4z" fill="#555"/></svg><svg class="a" style="left:294px;top:71px;" width="16" height="16" viewBox="0 0 16 16"><rect x="0.5" y="0.5" width="14" height="14" fill="#fff" stroke="#777" stroke-width="1"/><rect x="1" y="1" width="6" height="4" fill="#d9534f"/><rect x="1" y="6" width="6" height="4" fill="#3a6fc0"/><path d="M0.5 5.5h14M0.5 10h14M7.5 0.5v14" stroke="#777" stroke-width="0.8"/><rect x="7" y="7" width="8" height="8" fill="#fff" stroke="#555" stroke-width="0.8"/><path d="M9 10h4M9 12h4M12 9l-2 4" stroke="#333" stroke-width="0.8"/></svg><svg class="a" style="left:294px;top:94px;" width="16" height="16" viewBox="0 0 16 16"><rect x="0.5" y="0.5" width="14" height="14" fill="#fff" stroke="#777" stroke-width="1"/><path d="M0.5 5h14M0.5 9.5h14M5 0.5v14M10 0.5v14" stroke="#999" stroke-width="0.8"/><rect x="0.5" y="0.5" width="14" height="4" fill="#9db7db"/><path d="M6 15l8-8 2 2-8 7z" fill="#3a6fc0"/></svg><svg class="a" style="left:294px;top:116px;" width="16" height="17" viewBox="0 0 16 17"><rect x="0.5" y="0.5" width="14" height="14" fill="#fff" stroke="#777" stroke-width="1"/><path d="M2 4h10M2 7h8" stroke="#999" stroke-width="0.9"/><path d="M6 16l8-8 2 2-8 7z" fill="#3a6fc0"/></svg><div class="t" style="left:313.50px;top:73.06px;font-size:13px;color:#262626;transform:scaleX(0.9423);">Conditional Formatting</div><svg class="a" style="left:439.5px;top:78px;" width="7" height="4" viewBox="0 0 7 4"><path d="M0 0h7L3.5 4z" fill="#555"/></svg><div class="t" style="left:313.50px;top:95.96px;font-size:13px;color:#262626;transform:scaleX(0.8793);">Format as Table</div><svg class="a" style="left:397.5px;top:101px;" width="7" height="4" viewBox="0 0 7 4"><path d="M0 0h7L3.5 4z" fill="#555"/></svg><div class="t" style="left:313.50px;top:118.96px;font-size:13px;color:#262626;transform:scaleX(0.8547);">Cell Styles</div><svg class="a" style="left:368px;top:124px;" width="7" height="4" viewBox="0 0 7 4"><path d="M0 0h7L3.5 4z" fill="#555"/></svg><div class="t" style="left:356.00px;top:142.71px;font-size:13px;color:#262626;transform:scaleX(0.8191);">Styles</div><svg class="a" style="left:600px;top:74px;" width="27" height="29" viewBox="0 0 27 29"><path d="M2 1h14l5 5v15" fill="none" stroke="#7a8fc7" stroke-width="1.3"/><path d="M2 1v25h11" fill="none" stroke="#7a8fc7" stroke-width="1.3"/><path d="M6 18c3-4 5-9 4-11-1 2 1 6 6 8-4 0-8 2-10 3z" fill="none" stroke="#7a8fc7" stroke-width="1.1"/><path d="M16 22l4-4a2.5 2.5 0 0 1 3.5 3.5l-4 4a2.5 2.5 0 0 1-3.5-3.5zM14 25l4-4" fill="none" stroke="#4d72c7" stroke-width="1.6"/></svg><div class="t" style="left:593.50px;top:107.21px;font-size:13px;color:#262626;transform:scaleX(0.8647);">Create</div><div class="t" style="left:595.25px;top:122.96px;font-size:13px;color:#262626;transform:scaleX(0.8007);">a PDF</div><div class="t" style="left:571.00px;top:142.71px;font-size:13px;color:#262626;transform:scaleX(0.8998);">Adobe Acrobat</div><svg class="a" style="left:701px;top:147px;" width="12" height="7" viewBox="0 0 12 7"><path d="M1 6l5-5 5 5" fill="none" stroke="#555" stroke-width="1.1"/></svg><div class="a" style="left:1px;top:158px;width:720px;height:66px;background:#e6e6e6;"></div><div class="a" style="left:8px;top:168px;width:116px;height:25px;background:#fff;border:1px solid #c6c6c6"></div><div class="t" style="left:14.25px;top:174.71px;font-size:13px;color:#333;transform:scaleX(0.9111);">E1451</div><svg class="a" style="left:109px;top:178px;" width="9" height="5" viewBox="0 0 9 5"><path d="M0 0h9L4.5 5z" fill="#555"/></svg><div class="a" style="left:138.5px;top:173px;width:1.5px;height:1.5px;background:#9a9a9a;"></div><div class="a" style="left:138.5px;top:181px;width:1.5px;height:1.5px;background:#9a9a9a;"></div><div class="a" style="left:138.5px;top:189px;width:1.5px;height:1.5px;background:#9a9a9a;"></div><div class="a" style="left:154px;top:168px;width:109px;height:25px;background:#fff;border:1px solid #d6d6d6"></div><svg class="a" style="left:167px;top:176px;" width="11" height="11" viewBox="0 0 11 11"><path d="M1 1l9 9M10 1l-9 9" stroke="#b5b5b5" stroke-width="1.3"/></svg><svg class="a" style="left:202px;top:175px;" width="14" height="12" viewBox="0 0 14 12"><path d="M1 6l4 5 8-10" fill="none" stroke="#b5b5b5" stroke-width="1.4"/></svg><div class="t" style="left:239.50px;top:174.46px;font-size:13px;color:#555;font-family:'Liberation Serif',serif;transform:scaleX(1.0605);font-style:italic;">fx</div><div class="a" style="left:268px;top:168px;width:446px;height:25px;background:#fff;border:1px solid #d6d6d6"></div><div class="t" style="left:279.25px;top:174.71px;font-size:13px;color:#333;transform:scaleX(1.0068);">ANITA SURYA WINATA</div><svg class="a" style="left:702px;top:178px;" width="9" height="6" viewBox="0 0 9 6"><path d="M1 1l3.5 3.5L8 1" fill="none" stroke="#444" stroke-width="1.5"/></svg><div class="a" style="left:1px;top:203px;width:698px;height:21px;background:#e6e6e6;"></div><svg class="a" style="left:18px;top:207px;" width="14" height="14" viewBox="0 0 14 14"><path d="M13 0v13H0z" fill="#b8b8b8"/></svg><div class="a" style="left:34px;top:203px;width:1px;height:21px;background:#c4c4c4;"></div><div class="a" style="left:160px;top:204px;width:210px;height:18px;background:linear-gradient(#d2d2d2,#d2d2d2 20%,#c8d8cc 40%,#d9cccc 60%,#c9d4d4 80%,#d6d0d0)"></div><div class="a" style="left:160px;top:221px;width:211px;height:2px;background:#217346;"></div><div class="a" style="left:160px;top:204px;width:1px;height:19px;background:#c4c4c4;"></div><div class="a" style="left:370px;top:204px;width:1px;height:19px;background:#c4c4c4;"></div><div class="a" style="left:580px;top:204px;width:1px;height:19px;background:#c4c4c4;"></div><div class="a" style="left:1px;top:223px;width:698px;height:1px;background:#b8b8b8;"></div><div class="t" style="left:92.55px;top:207.71px;font-size:13px;color:#333;">D</div><div class="t" style="left:261.16px;top:207.71px;font-size:13px;color:#333;">E</div><div class="t" style="left:471.52px;top:207.71px;font-size:13px;color:#333;">F</div><div class="t" style="left:680.19px;top:207.71px;font-size:13px;color:#333;">G</div><div class="a" style="left:34px;top:224px;width:665px;height:585px;background:#ebe9fb;"></div><div class="a" style="left:1px;top:224px;width:33px;height:585px;background:#e6e6e6;"></div><div class="t" style="left:4.25px;top:228.26px;font-size:13px;color:#262626;transform:scaleX(0.9768);">1443</div><div class="t" style="left:43.50px;top:228.67px;font-size:11px;color:#121218;transform:scaleX(0.9244);">Rp</div><div class="t" style="left:75.05px;top:228.67px;font-size:11px;color:#121218;transform:scaleX(1.1121);">40.027.814,23</div><div class="t" style="left:163.50px;top:228.67px;font-size:11px;color:#121218;transform:scaleX(0.9476);">CAHAYA BERKAT GLOB</div><div class="t" style="left:373.50px;top:228.67px;font-size:11px;color:#121218;transform:scaleX(0.9532);">-</div><div class="a" style="left:1px;top:243px;width:33px;height:1px;background:#c9c9c9;"></div><div class="a" style="left:34px;top:243px;width:664px;height:1px;background:#121218;"></div><div class="t" style="left:4.25px;top:248.26px;font-size:13px;color:#262626;transform:scaleX(0.9768);">1444</div><div class="t" style="left:43.50px;top:248.67px;font-size:11px;color:#121218;transform:scaleX(0.9244);">Rp</div><div class="t" style="left:75.05px;top:248.67px;font-size:11px;color:#121218;transform:scaleX(1.1121);">25.027.814,23</div><div class="t" style="left:163.50px;top:248.67px;font-size:11px;color:#121218;transform:scaleX(1.0086);">ANITA SURYA WINATA</div><div class="t" style="left:373.50px;top:248.67px;font-size:11px;color:#121218;transform:scaleX(0.9333);">BCA CARD</div><div class="a" style="left:1px;top:263px;width:33px;height:1px;background:#c9c9c9;"></div><div class="a" style="left:34px;top:263px;width:664px;height:1px;background:#121218;"></div><div class="t" style="left:4.25px;top:282.26px;font-size:13px;color:#262626;transform:scaleX(0.9768);">1445</div><div class="t" style="left:43.50px;top:275.67px;font-size:11px;color:#121218;transform:scaleX(0.9244);">Rp</div><div class="t" style="left:75.05px;top:275.67px;font-size:11px;color:#121218;transform:scaleX(1.1121);">21.098.171,23</div><div class="t" style="left:163.50px;top:275.67px;font-size:11px;color:#121218;transform:scaleX(1.0086);">ANITA SURYA WINATA</div><div class="t" style="left:373.50px;top:275.67px;font-size:11px;color:#121218;transform:scaleX(0.9333);">BCA CARD</div><div class="a" style="left:1px;top:297px;width:33px;height:1px;background:#c9c9c9;"></div><div class="a" style="left:34px;top:297px;width:664px;height:1px;background:#121218;"></div><div class="t" style="left:4.25px;top:316.26px;font-size:13px;color:#262626;transform:scaleX(0.9768);">1446</div><div class="t" style="left:43.50px;top:309.67px;font-size:11px;color:#121218;transform:scaleX(0.9244);">Rp</div><div class="t" style="left:75.05px;top:309.67px;font-size:11px;color:#121218;transform:scaleX(1.1121);">20.963.171,23</div><div class="t" style="left:163.50px;top:309.67px;font-size:11px;color:#121218;transform:scaleX(1.0086);">ANITA SURYA WINATA</div><div class="t" style="left:373.50px;top:309.67px;font-size:11px;color:#121218;transform:scaleX(0.9304);">STELLA JULIANTI PA</div><div class="a" style="left:1px;top:331px;width:33px;height:1px;background:#c9c9c9;"></div><div class="a" style="left:34px;top:331px;width:664px;height:1px;background:#121218;"></div><div class="t" style="left:4.25px;top:350.26px;font-size:13px;color:#262626;transform:scaleX(0.9768);">1447</div><div class="t" style="left:43.50px;top:343.67px;font-size:11px;color:#121218;transform:scaleX(0.9244);">Rp</div><div class="t" style="left:75.05px;top:343.67px;font-size:11px;color:#121218;transform:scaleX(1.1121);">20.663.171,23</div><div class="t" style="left:163.50px;top:343.67px;font-size:11px;color:#121218;transform:scaleX(1.0086);">ANITA SURYA WINATA</div><div class="t" style="left:373.50px;top:343.67px;font-size:11px;color:#121218;transform:scaleX(1.1060);">39358/OVO</div><div class="a" style="left:1px;top:365px;width:33px;height:1px;background:#c9c9c9;"></div><div class="a" style="left:34px;top:365px;width:664px;height:1px;background:#121218;"></div><div class="t" style="left:4.25px;top:384.26px;font-size:13px;color:#262626;transform:scaleX(0.9768);">1448</div><div class="t" style="left:43.50px;top:377.67px;font-size:11px;color:#121218;transform:scaleX(0.9244);">Rp</div><div class="t" style="left:75.05px;top:377.67px;font-size:11px;color:#121218;transform:scaleX(1.1121);">20.455.471,23</div><div class="t" style="left:163.50px;top:377.67px;font-size:11px;color:#121218;transform:scaleX(1.0086);">ANITA SURYA WINATA</div><div class="t" style="left:373.50px;top:377.67px;font-size:11px;color:#121218;transform:scaleX(1.0499);">80777/TOKOPEDIA</div><div class="a" style="left:1px;top:399px;width:33px;height:1px;background:#c9c9c9;"></div><div class="a" style="left:34px;top:399px;width:664px;height:1px;background:#121218;"></div><div class="t" style="left:4.25px;top:418.26px;font-size:13px;color:#262626;transform:scaleX(0.9768);">1449</div><div class="t" style="left:43.50px;top:411.67px;font-size:11px;color:#121218;transform:scaleX(0.9244);">Rp</div><div class="t" style="left:75.05px;top:411.67px;font-size:11px;color:#121218;transform:scaleX(1.1121);">20.279.271,23</div><div class="t" style="left:163.50px;top:411.67px;font-size:11px;color:#121218;transform:scaleX(1.0086);">ANITA SURYA WINATA</div><div class="t" style="left:373.50px;top:411.67px;font-size:11px;color:#121218;transform:scaleX(1.0499);">80777/TOKOPEDIA</div><div class="a" style="left:1px;top:433px;width:33px;height:1px;background:#c9c9c9;"></div><div class="a" style="left:34px;top:433px;width:664px;height:1px;background:#121218;"></div><div class="t" style="left:4.25px;top:438.26px;font-size:13px;color:#262626;transform:scaleX(0.9768);">1450</div><div class="t" style="left:43.50px;top:438.67px;font-size:11px;color:#121218;transform:scaleX(0.9244);">Rp</div><div class="t" style="left:75.05px;top:438.67px;font-size:11px;color:#121218;transform:scaleX(1.1121);">60.279.271,23</div><div class="t" style="left:163.50px;top:438.67px;font-size:11px;color:#121218;transform:scaleX(0.9476);">CAHAYA BERKAT GLOB</div><div class="t" style="left:373.50px;top:438.67px;font-size:11px;color:#121218;transform:scaleX(0.9532);">-</div><div class="a" style="left:1px;top:453px;width:33px;height:1px;background:#c9c9c9;"></div><div class="a" style="left:34px;top:453px;width:664px;height:1px;background:#121218;"></div><div class="a" style="left:1px;top:454px;width:33px;height:33px;background:#d2d2d2;"></div><div class="t" style="left:4.25px;top:472.26px;font-size:13px;color:#217346;transform:scaleX(0.9768);">1451</div><div class="t" style="left:43.50px;top:465.67px;font-size:11px;color:#121218;transform:scaleX(0.9244);">Rp</div><div class="t" style="left:75.05px;top:465.67px;font-size:11px;color:#121218;transform:scaleX(1.1121);">45.094.944,23</div><div class="t" style="left:163.50px;top:465.67px;font-size:11px;color:#121218;transform:scaleX(1.0086);">ANITA SURYA WINATA</div><div class="t" style="left:373.50px;top:465.67px;font-size:11px;color:#121218;transform:scaleX(0.9931);">MEGA GLOBAL MAKMUR</div><div class="a" style="left:1px;top:487px;width:33px;height:1px;background:#c9c9c9;"></div><div class="a" style="left:34px;top:487px;width:664px;height:1px;background:#121218;"></div><div class="t" style="left:4.25px;top:506.26px;font-size:13px;color:#262626;transform:scaleX(0.9768);">1452</div><div class="t" style="left:43.50px;top:499.67px;font-size:11px;color:#121218;transform:scaleX(0.9244);">Rp</div><div class="t" style="left:75.05px;top:499.67px;font-size:11px;color:#121218;transform:scaleX(1.1121);">60.094.944,23</div><div class="t" style="left:163.50px;top:499.67px;font-size:11px;color:#121218;transform:scaleX(0.9476);">CAHAYA BERKAT GLOB</div><div class="a" style="left:1px;top:521px;width:33px;height:1px;background:#c9c9c9;"></div><div class="a" style="left:34px;top:521px;width:664px;height:1px;background:#121218;"></div><div class="t" style="left:4.25px;top:540.26px;font-size:13px;color:#262626;transform:scaleX(0.9768);">1453</div><div class="t" style="left:43.50px;top:533.67px;font-size:11px;color:#121218;transform:scaleX(0.9244);">Rp</div><div class="t" style="left:75.05px;top:533.67px;font-size:11px;color:#121218;transform:scaleX(1.1121);">59.994.944,23</div><div class="t" style="left:163.50px;top:533.67px;font-size:11px;color:#121218;transform:scaleX(0.9532);">-</div><div class="t" style="left:373.50px;top:533.67px;font-size:11px;color:#121218;transform:scaleX(1.1060);">39358/OVO</div><div class="a" style="left:1px;top:555px;width:33px;height:1px;background:#c9c9c9;"></div><div class="a" style="left:34px;top:555px;width:664px;height:1px;background:#121218;"></div><div class="t" style="left:4.25px;top:574.26px;font-size:13px;color:#262626;transform:scaleX(0.9768);">1454</div><div class="t" style="left:43.50px;top:567.67px;font-size:11px;color:#121218;transform:scaleX(0.9244);">Rp</div><div class="t" style="left:75.05px;top:567.67px;font-size:11px;color:#121218;transform:scaleX(1.1121);">59.494.944,23</div><div class="t" style="left:163.50px;top:567.67px;font-size:11px;color:#121218;transform:scaleX(0.9532);">-</div><div class="t" style="left:373.50px;top:567.67px;font-size:11px;color:#121218;transform:scaleX(1.0246);">19019/FACEBOOK PAY</div><div class="a" style="left:1px;top:589px;width:33px;height:1px;background:#c9c9c9;"></div><div class="a" style="left:34px;top:589px;width:664px;height:1px;background:#121218;"></div><div class="t" style="left:4.25px;top:594.26px;font-size:13px;color:#262626;transform:scaleX(0.9768);">1455</div><div class="t" style="left:43.50px;top:594.67px;font-size:11px;color:#121218;transform:scaleX(0.9244);">Rp</div><div class="t" style="left:75.05px;top:594.67px;font-size:11px;color:#121218;transform:scaleX(1.1121);">59.479.944,23</div><div class="t" style="left:163.50px;top:594.67px;font-size:11px;color:#121218;transform:scaleX(0.9532);">-</div><div class="t" style="left:373.50px;top:594.67px;font-size:11px;color:#121218;transform:scaleX(1.0037);">Rames Reme</div><div class="a" style="left:1px;top:609px;width:33px;height:1px;background:#c9c9c9;"></div><div class="a" style="left:34px;top:609px;width:664px;height:1px;background:#121218;"></div><div class="t" style="left:4.25px;top:628.26px;font-size:13px;color:#262626;transform:scaleX(0.9768);">1456</div><div class="t" style="left:43.50px;top:621.67px;font-size:11px;color:#121218;transform:scaleX(0.9244);">Rp</div><div class="t" style="left:75.05px;top:621.67px;font-size:11px;color:#121218;transform:scaleX(1.1121);">56.729.944,23</div><div class="t" style="left:163.50px;top:621.67px;font-size:11px;color:#121218;transform:scaleX(0.9532);">-</div><div class="t" style="left:373.50px;top:621.67px;font-size:11px;color:#121218;transform:scaleX(0.9694);">ANITA SURYA</div><div class="a" style="left:1px;top:643px;width:33px;height:1px;background:#c9c9c9;"></div><div class="a" style="left:34px;top:643px;width:664px;height:1px;background:#121218;"></div><div class="t" style="left:4.25px;top:662.26px;font-size:13px;color:#262626;transform:scaleX(0.9768);">1457</div><div class="t" style="left:43.50px;top:655.67px;font-size:11px;color:#121218;transform:scaleX(0.9244);">Rp</div><div class="t" style="left:75.05px;top:655.67px;font-size:11px;color:#121218;transform:scaleX(1.1121);">56.179.944,23</div><div class="t" style="left:163.50px;top:655.67px;font-size:11px;color:#121218;transform:scaleX(0.9532);">-</div><div class="t" style="left:373.50px;top:655.67px;font-size:11px;color:#121218;transform:scaleX(0.9694);">ANITA SURYA</div><div class="a" style="left:1px;top:677px;width:33px;height:1px;background:#c9c9c9;"></div><div class="a" style="left:34px;top:677px;width:664px;height:1px;background:#121218;"></div><div class="t" style="left:4.25px;top:696.26px;font-size:13px;color:#262626;transform:scaleX(0.9768);">1458</div><div class="t" style="left:43.50px;top:689.67px;font-size:11px;color:#121218;transform:scaleX(0.9244);">Rp</div><div class="t" style="left:75.05px;top:689.67px;font-size:11px;color:#121218;transform:scaleX(1.1121);">55.885.698,23</div><div class="t" style="left:163.50px;top:689.67px;font-size:11px;color:#121218;transform:scaleX(0.9532);">-</div><div class="t" style="left:373.50px;top:689.67px;font-size:11px;color:#121218;transform:scaleX(1.0026);">ANITA SURYA WIN</div><div class="a" style="left:1px;top:711px;width:33px;height:1px;background:#c9c9c9;"></div><div class="a" style="left:34px;top:711px;width:664px;height:1px;background:#121218;"></div><div class="t" style="left:4.25px;top:730.26px;font-size:13px;color:#262626;transform:scaleX(0.9768);">1459</div><div class="t" style="left:43.50px;top:723.67px;font-size:11px;color:#121218;transform:scaleX(0.9244);">Rp</div><div class="t" style="left:75.05px;top:723.67px;font-size:11px;color:#121218;transform:scaleX(1.1121);">53.135.698,23</div><div class="t" style="left:163.50px;top:723.67px;font-size:11px;color:#121218;transform:scaleX(0.9532);">-</div><div class="t" style="left:373.50px;top:723.67px;font-size:11px;color:#121218;transform:scaleX(1.0026);">ANITA SURYA WIN</div><div class="a" style="left:1px;top:745px;width:33px;height:1px;background:#c9c9c9;"></div><div class="a" style="left:34px;top:745px;width:664px;height:1px;background:#121218;"></div><div class="t" style="left:4.25px;top:764.26px;font-size:13px;color:#262626;transform:scaleX(0.9768);">1460</div><div class="t" style="left:43.50px;top:757.67px;font-size:11px;color:#121218;transform:scaleX(0.9244);">Rp</div><div class="t" style="left:67.80px;top:757.67px;font-size:11px;color:#121218;transform:scaleX(1.1181);">603.135.698,23</div><div class="t" style="left:163.50px;top:757.67px;font-size:11px;color:#121218;transform:scaleX(0.9694);">ANITA SURYA</div><div class="t" style="left:373.50px;top:757.67px;font-size:11px;color:#121218;transform:scaleX(0.9532);">-</div><div class="a" style="left:1px;top:779px;width:33px;height:1px;background:#c9c9c9;"></div><div class="a" style="left:34px;top:779px;width:664px;height:1px;background:#121218;"></div><div class="t" style="left:4.25px;top:798.26px;font-size:13px;color:#262626;transform:scaleX(0.9768);">1461</div><div class="t" style="left:43.50px;top:791.67px;font-size:11px;color:#121218;transform:scaleX(0.9244);">Rp</div><div class="t" style="left:67.80px;top:791.67px;font-size:11px;color:#121218;transform:scaleX(1.1181);">433.034.797,23</div><div class="t" style="left:163.50px;top:791.67px;font-size:11px;color:#121218;transform:scaleX(0.9532);">-</div><div class="t" style="left:373.50px;top:791.67px;font-size:11px;color:#121218;transform:scaleX(0.9610);">TRINITI MENARA SER</div><div class="a" style="left:1px;top:813px;width:33px;height:1px;background:#c9c9c9;"></div><div class="a" style="left:34px;top:813px;width:664px;height:1px;background:#121218;"></div><div class="a" style="left:34px;top:224px;width:1px;height:585px;background:#b0b0b0;"></div><div class="a" style="left:160px;top:224px;width:1px;height:585px;background:#121218;"></div><div class="a" style="left:370px;top:224px;width:1px;height:585px;background:#121218;"></div><div class="a" style="left:580px;top:224px;width:1px;height:585px;background:#121218;"></div><div class="a" style="left:698px;top:224px;width:1px;height:585px;background:#8a8a8a;"></div><div class="a" style="left:581px;top:224px;width:117px;height:585px;overflow:hidden"><div class="t" style="left:2.50px;top:4.67px;font-size:11px;color:#121218;transform:scaleX(0.9490);">TRSF E-BANKING CR pi</div><div class="t" style="left:2.50px;top:24.67px;font-size:11px;color:#121218;transform:scaleX(0.9490);">KARTU KREDIT/PL pinjaman</div><div class="t" style="left:2.50px;top:44.27px;font-size:11px;color:#121218;transform:scaleX(0.9588);">KARTU KREDIT/PL</div><div class="t" style="left:2.50px;top:60.97px;font-size:11px;color:#121218;transform:scaleX(1.1460);">4691511597991225</div><div class="t" style="left:2.50px;top:78.27px;font-size:11px;color:#121218;transform:scaleX(0.9446);">TRSF E-BANKING DB</div><div class="t" style="left:2.50px;top:94.97px;font-size:11px;color:#121218;transform:scaleX(1.0200);">1712/FTSCY/WS95271</div><div class="t" style="left:2.50px;top:112.27px;font-size:11px;color:#121218;transform:scaleX(0.9446);">TRSF E-BANKING DB</div><div class="t" style="left:2.50px;top:128.97px;font-size:11px;color:#121218;transform:scaleX(1.0200);">1712/FTFVA/WS95271</div><div class="t" style="left:2.50px;top:146.27px;font-size:11px;color:#121218;transform:scaleX(0.9446);">TRSF E-BANKING DB</div><div class="t" style="left:2.50px;top:162.97px;font-size:11px;color:#121218;transform:scaleX(1.0200);">1712/FTFVA/WS95271</div><div class="t" style="left:2.50px;top:180.27px;font-size:11px;color:#121218;transform:scaleX(0.9446);">TRSF E-BANKING DB</div><div class="t" style="left:2.50px;top:196.97px;font-size:11px;color:#121218;transform:scaleX(1.0200);">1712/FTFVA/WS95271</div><div class="t" style="left:2.50px;top:214.67px;font-size:11px;color:#121218;transform:scaleX(0.9490);">TRSF E-BANKING CR pi</div><div class="t" style="left:2.50px;top:234.27px;font-size:11px;color:#121218;transform:scaleX(0.9491);">TRSF E-BANKING DB pi</div><div class="t" style="left:2.50px;top:250.97px;font-size:11px;color:#121218;transform:scaleX(0.9492);">pinjaman</div><div class="t" style="left:2.50px;top:268.27px;font-size:11px;color:#121218;transform:scaleX(0.9491);">TRSF E-BANKING CR</div><div class="t" style="left:2.50px;top:284.97px;font-size:11px;color:#121218;transform:scaleX(1.0200);">1812/FTSCY/WS95051</div><div class="t" style="left:2.50px;top:302.27px;font-size:11px;color:#121218;transform:scaleX(0.9446);">TRSF E-BANKING DB</div><div class="t" style="left:2.50px;top:318.97px;font-size:11px;color:#121218;transform:scaleX(1.0200);">1812/FTFVA/WS95271</div><div class="t" style="left:2.50px;top:336.27px;font-size:11px;color:#121218;transform:scaleX(0.9446);">TRSF E-BANKING DB</div><div class="t" style="left:2.50px;top:352.97px;font-size:11px;color:#121218;transform:scaleX(1.0200);">1812/FTFVA/WS95271</div><div class="t" style="left:2.50px;top:370.67px;font-size:11px;color:#121218;transform:scaleX(0.9562);">TRANSAKSI DEBIT QR 0</div><div class="t" style="left:2.50px;top:390.27px;font-size:11px;color:#121218;transform:scaleX(0.9763);">DB OTOMATIS AUTO DB</div><div class="t" style="left:2.50px;top:406.97px;font-size:11px;color:#121218;transform:scaleX(0.9325);">DB</div><div class="t" style="left:2.50px;top:424.27px;font-size:11px;color:#121218;transform:scaleX(0.9763);">DB OTOMATIS AUTO DB</div><div class="t" style="left:2.50px;top:440.97px;font-size:11px;color:#121218;transform:scaleX(0.9325);">DB</div><div class="t" style="left:2.50px;top:458.27px;font-size:11px;color:#121218;transform:scaleX(0.9763);">DB OTOMATIS AUTO DB</div><div class="t" style="left:2.50px;top:474.97px;font-size:11px;color:#121218;transform:scaleX(0.9325);">DB</div><div class="t" style="left:2.50px;top:492.27px;font-size:11px;color:#121218;transform:scaleX(0.9763);">DB OTOMATIS AUTO DB</div><div class="t" style="left:2.50px;top:508.97px;font-size:11px;color:#121218;transform:scaleX(0.9325);">DB</div><div class="t" style="left:2.50px;top:526.27px;font-size:11px;color:#121218;transform:scaleX(0.9763);">KROTOMATIS AUTO CR</div><div class="t" style="left:2.50px;top:542.97px;font-size:11px;color:#121218;transform:scaleX(0.8968);">CCOS CR</div><div class="t" style="left:2.50px;top:560.27px;font-size:11px;color:#121218;transform:scaleX(0.9446);">TRSF E-BANKING DB</div><div class="t" style="left:2.50px;top:576.97px;font-size:11px;color:#121218;transform:scaleX(1.0200);">1912/FTSCY/WS95271</div></div><div class="a" style="left:160px;top:453px;width:211px;height:35px;border:2px solid #217346"></div><div class="a" style="left:368px;top:485px;width:5px;height:5px;background:#217346;border:1px solid #fff;"></div><div class="a" style="left:34px;top:453px;width:1.5px;height:35px;background:#217346;"></div><div class="a" style="left:160px;top:399px;width:211px;height:35px;border:2px dashed #1f6b45"></div><div class="a" style="left:374px;top:491px;width:61px;height:23px;background:#f7f7f7;border:1px solid #c8c8c8"></div><svg class="a" style="left:377px;top:494px;" width="16" height="17" viewBox="0 0 16 17"><rect x="1" y="3" width="10" height="12" fill="#f1c27d"/><rect x="3.5" y="1.5" width="5" height="3" fill="#666"/><path d="M6 8h5l3 3v5H6z" fill="#fff" stroke="#555" stroke-width="1"/></svg><div class="t" style="left:396.50px;top:496.46px;font-size:12px;color:#333;transform:scaleX(0.9660);">(Ctrl)</div><svg class="a" style="left:426px;top:501px;" width="6" height="3" viewBox="0 0 6 3"><path d="M0 0h6L3 3z" fill="#555"/></svg><div class="a" style="left:699px;top:203px;width:21px;height:606px;background:#e6e6e6;"></div><div class="a" style="left:702px;top:224px;width:15px;height:585px;background:#dadada;"></div><div class="a" style="left:702px;top:206px;width:15px;height:15px;background:#fff;border:1px solid #c6c6c6"></div><svg class="a" style="left:705px;top:211px;" width="9" height="5" viewBox="0 0 9 5"><path d="M0 5h9L4.5 0z" fill="#777"/></svg><div class="a" style="left:703px;top:753px;width:13px;height:16px;background:#fff;border:1px solid #c6c6c6"></div><div class="a" style="left:702px;top:796px;width:15px;height:13px;background:#fff;border:1px solid #c6c6c6"></div><svg class="a" style="left:705px;top:800px;" width="9" height="5" viewBox="0 0 9 5"><path d="M0 0h9L4.5 5z" fill="#777"/></svg><div class="a" style="left:1px;top:809px;width:718px;height:28px;background:#e6e6e6;"></div><div class="a" style="left:1px;top:809px;width:718px;height:1px;background:#c6c6c6;"></div><svg class="a" style="left:27px;top:818px;" width="6" height="9" viewBox="0 0 6 9"><path d="M5 0v9L0 4.5z" fill="#bdbdbd"/></svg><svg class="a" style="left:57px;top:818px;" width="6" height="9" viewBox="0 0 6 9"><path d="M0 0v9l5-4.5z" fill="#bdbdbd"/></svg><div class="a" style="left:102.5px;top:809px;width:40px;height:24px;background:#fff;"></div><div class="a" style="left:102.5px;top:831px;width:40px;height:2px;background:#217346;"></div><div class="t" style="left:114.80px;top:815.26px;font-size:13px;color:#217346;font-weight:700;transform:scaleX(0.8120);">RK</div><div class="t" style="left:155.30px;top:815.26px;font-size:13px;color:#444;transform:scaleX(0.9295);">Sheet2</div><div class="a" style="left:207px;top:813px;width:1px;height:18px;background:#bdbdbd;"></div><div class="t" style="left:220.50px;top:815.26px;font-size:13px;color:#444;transform:scaleX(0.9053);">Sheet1</div><div class="a" style="left:271.5px;top:813px;width:1px;height:18px;background:#bdbdbd;"></div><svg class="a" style="left:303px;top:813px;" width="18" height="18" viewBox="0 0 18 18"><circle cx="9" cy="9" r="8" fill="none" stroke="#777" stroke-width="1.3"/><path d="M9 4.5v9M4.5 9h9" stroke="#777" stroke-width="1.5"/></svg><div class="a" style="left:433px;top:815px;width:1.5px;height:1.5px;background:#9a9a9a;"></div><div class="a" style="left:433px;top:821px;width:1.5px;height:1.5px;background:#9a9a9a;"></div><div class="a" style="left:433px;top:827px;width:1.5px;height:1.5px;background:#9a9a9a;"></div><div class="a" style="left:450.5px;top:816px;width:248px;height:14.5px;background:#dadada;"></div><div class="a" style="left:450.5px;top:816px;width:14.5px;height:14.5px;background:#fff;border:1px solid #c6c6c6"></div><svg class="a" style="left:454.5px;top:819.5px;" width="5" height="8" viewBox="0 0 5 8"><path d="M5 0v8L0 4z" fill="#555"/></svg><div class="a" style="left:547px;top:816px;width:81.5px;height:14.5px;background:#fff;border:1px solid #c6c6c6"></div><div class="a" style="left:684.5px;top:816px;width:14px;height:14.5px;background:#fff;border:1px solid #c6c6c6"></div><svg class="a" style="left:689.5px;top:819.5px;" width="5" height="8" viewBox="0 0 5 8"><path d="M0 0v8l5-4z" fill="#555"/></svg><div class="a" style="left:2px;top:837px;width:718px;height:22px;background:#f3f3f3;"></div><div class="a" style="left:1px;top:837px;width:718px;height:1px;background:#dadada;"></div><div class="t" style="left:9.20px;top:841.96px;font-size:12px;color:#333;transform:scaleX(0.9276);">Select destination and press ENTER or choose Paste</div><div class="a" style="left:409.25px;top:838px;width:40px;height:20px;background:#c8c8c8;"></div><svg class="a" style="left:421.5px;top:841px;" width="14" height="13" viewBox="0 0 14 13"><rect x="0.5" y="0.5" width="13" height="12" fill="none" stroke="#666" stroke-width="1"/><path d="M5 0.5v12M9 0.5v12M0.5 4.5h13M0.5 8.5h13" stroke="#666" stroke-width="1"/></svg><svg class="a" style="left:462px;top:841px;" width="14" height="13" viewBox="0 0 14 13"><rect x="0.5" y="0.5" width="13" height="12" fill="none" stroke="#666" stroke-width="1"/><rect x="3" y="3" width="8" height="7" fill="none" stroke="#666" stroke-width="1"/><path d="M4.5 5.5h5M4.5 7.5h5" stroke="#666" stroke-width="0.8"/></svg><svg class="a" style="left:502px;top:841px;" width="14" height="13" viewBox="0 0 14 13"><rect x="0.5" y="0.5" width="13" height="12" fill="none" stroke="#666" stroke-width="1"/><path d="M0.5 5.5h6v-5M6.5 5.5v-5" fill="none" stroke="#666" stroke-width="1"/></svg><div class="a" style="left:535.5px;top:847px;width:7px;height:1.2px;background:#555;"></div><div class="a" style="left:548px;top:847.5px;width:99px;height:1px;background:#a0a0a0;"></div><div class="a" style="left:596px;top:842.5px;width:5px;height:10px;background:#555;"></div><div class="a" style="left:653px;top:847px;width:8px;height:1.2px;background:#555;"></div><div class="a" style="left:656.4000000000001px;top:843.5px;width:1.2px;height:8px;background:#555;"></div><div class="t" style="left:674.75px;top:841.46px;font-size:12px;color:#444;transform:scaleX(0.8550);">100%</div><div class="a" style="left:0px;top:0px;width:2px;height:859px;background:#36604a;"></div><div class="a" style="left:2px;top:64px;width:1px;height:795px;background:#dcf0e6;"></div><div class="a" style="left:719px;top:64px;width:1px;height:795px;background:#e2efe7;"></div><div class="a" style="left:720px;top:0px;width:1px;height:860px;background:#217346;"></div></div><div class="a" style="left:0;top:859px;width:1440px;height:41px;background:#1f241e"></div><svg class="a" style="left:15px;top:872px" width="18" height="17" viewBox="0 0 18 17"><path d="M0 2.4L7.3 1.4v6.9H0zM8.3 1.3L18 0v8.3H8.3zM0 9.3h7.3v6.9L0 15.2zM8.3 9.3H18V17l-9.7-1.3z" fill="#fff"/></svg><div class="a" style="left:48px;top:859px;width:288px;height:41px;background:#f0f0f0"></div><svg class="a" style="left:59px;top:872px" width="18" height="17" viewBox="0 0 18 17"><circle cx="11" cy="6.5" r="5.5" fill="none" stroke="#222" stroke-width="1.3"/><path d="M7 10.5L1 16.5" stroke="#222" stroke-width="1.4"/></svg><div class="t" style="left:88.75px;top:873.66px;font-size:15px;color:#333;transform:scaleX(0.9560);">Type here to search</div><svg class="a" style="left:255px;top:858px" width="85" height="42" viewBox="0 0 85 42"><path d="M8 42C22 36 50 33 80 35V42z" fill="#e2c596"/><path d="M13 19c-1-4 3-9 8-13l4-2 3 2 9 7c7 0 15 0 22 3 2 4 2 8-1 11-8 2-19 2-26 0-2-4-4-8-6-10-4 2-9 5-13 2z" fill="#f6f5fa" stroke="#9a97b5" stroke-width="0.8"/><path d="M31 26l-1 14h2l2-13zM35 27l1 13h2l-1-13zM51 27l-1 13h2l2-12zM55 26l1 14h2l-1-13z" fill="#cfcddc" stroke="#9a97b5" stroke-width="0.5"/><path d="M20 5l17 8" stroke="#2f2a55" stroke-width="3"/><path d="M24 8l-2 7M28 10l-2 7M32 12l-2 8M36 14l-3 8M41 14l1 13M46 14l-1 13M50 15l3 11M55 16l-1 8M59 17l-3 7" stroke="#3a3562" stroke-width="1.7"/><path d="M13 17c-1 2 0 3 2 4" stroke="#222" stroke-width="2.2" fill="none"/><path d="M58 16c3 3 5 10 8 16" stroke="#2f2a55" stroke-width="2.6" fill="none"/></svg><svg class="a" style="left:351px;top:868px" width="24" height="25" viewBox="0 0 24 25"><defs><linearGradient id="eg" x1="0" y1="0" x2="1" y2="1"><stop offset="0" stop-color="#3cc8e6"/><stop offset=".5" stop-color="#1a8ad8"/><stop offset="1" stop-color="#0b5bb8"/></linearGradient><linearGradient id="eg2" x1="0" y1="0" x2="1" y2="0"><stop offset="0" stop-color="#2fb9d8"/><stop offset="1" stop-color="#6ad36a"/></linearGradient></defs><path d="M12 1C5.5 1 1 6.5 1 12.5 1 19 6 24 12 24c4 0 7-2 9-4-3 1.5-8 1-10.5-2.5C8 14 9.5 9.5 14 9.5c4.5 0 8 3 8 6.5.8-1.2 1.5-3 1.5-4.5C23.5 6 18.5 1 12 1z" fill="url(#eg)"/><path d="M3 8c2.5-5 7-7 11.5-6.5 5 .5 9 4.5 9 9.5 0 2-1 4-2 5 0-3.5-3-7-8-7-4 0-6 2-6.5 4-.5-3-2-5-4-5z" fill="url(#eg2)"/></svg><svg class="a" style="left:400px;top:867px" width="24" height="25" viewBox="0 0 24 25"><defs><radialGradient id="ff" cx=".4" cy=".7" r=".8"><stop offset="0" stop-color="#ffbd2e"/><stop offset=".5" stop-color="#ff5a2a"/><stop offset="1" stop-color="#e3186b"/></radialGradient></defs><circle cx="12" cy="14" r="10.5" fill="url(#ff)"/><path d="M14 2c4 2 8 6 8 11 0-4-3-6-5-6z" fill="#ffd23a"/><circle cx="12" cy="13.5" r="4.8" fill="#7542e5"/><path d="M5 10c1-3 4-5 7-5" fill="none" stroke="#ffb03a" stroke-width="2"/></svg><svg class="a" style="left:449px;top:870px" width="23" height="19" viewBox="0 0 23 19"><path d="M1 2h8l2 2h11v14H1z" fill="#f6c444"/><path d="M1 6h21v12H1z" fill="#fcd860"/><path d="M5 18V10h13v8h-3v-5H8v5z" fill="#3a8fdc"/></svg><div class="a" style="left:441px;top:897px;width:40px;height:3px;background:#8cb4d8"></div><svg class="a" style="left:497px;top:868px" width="25" height="25" viewBox="0 0 25 25"><rect x="1" y="6" width="23" height="18" rx="2.5" fill="#f4f4f6"/><path d="M7 6V3a1.5 1.5 0 0 1 1.5-1.5h8A1.5 1.5 0 0 1 18 3v3" fill="none" stroke="#3aa6c9" stroke-width="1.8"/><rect x="7.5" y="10" width="4.5" height="4.5" fill="#e74c3c"/><rect x="13" y="10" width="4.5" height="4.5" fill="#7cb342"/><rect x="7.5" y="15.5" width="4.5" height="4.5" fill="#2196f3"/><rect x="13" y="15.5" width="4.5" height="4.5" fill="#fbc02d"/></svg><svg class="a" style="left:547px;top:868px" width="22" height="24" viewBox="0 0 22 24"><circle cx="11" cy="12" r="10" fill="none" stroke="#1f7a2c" stroke-width="2"/><path d="M3 17l11-8 2-6-1 8-6 3z" fill="#f07a35"/><path d="M9 14l7 6" stroke="#c0392b" stroke-width="2"/></svg><svg class="a" style="left:596px;top:868px" width="25" height="24" viewBox="0 0 25 24"><ellipse cx="12" cy="9" rx="10.5" ry="6.5" transform="rotate(-15 12 9)" fill="#f1e6ec" stroke="#c58fa6" stroke-width="1"/><path d="M12 5l3 11M17 5l-4 11" stroke="#6a6a6a" stroke-width="1"/><circle cx="12" cy="19" r="2.8" fill="none" stroke="#3f86c7" stroke-width="1.8"/><circle cx="18" cy="19" r="2.8" fill="none" stroke="#3f86c7" stroke-width="1.8"/></svg><svg class="a" style="left:645px;top:868px" width="25" height="25" viewBox="0 0 25 25"><circle cx="12.5" cy="12.5" r="12" fill="#e0435a"/><path d="M8 18l4.5-11 4.5 11" fill="none" stroke="#fff" stroke-width="2"/></svg><svg class="a" style="left:694px;top:868px" width="26" height="26" viewBox="0 0 26 26"><circle cx="12" cy="12" r="11" fill="#db4437"/><path d="M12 12L1.5 15A11 11 0 0 0 12 23z" fill="#0f9d58"/><path d="M12 12h11A11 11 0 0 1 12 23z" fill="#f4c20d"/><circle cx="12" cy="12" r="5" fill="#fff"/><circle cx="12" cy="12" r="3.8" fill="#4285f4"/><path d="M9 15c3-6 10-6 13-3 2 2 3 5 2 8-2 3-5 5-9 5-3 0-5-3-6-10z" fill="#e9c46a"/><circle cx="14" cy="18" r="1" fill="#333"/><circle cx="19" cy="18" r="1" fill="#333"/><path d="M9 14c2-4 6-5 10-4" fill="#4a7bd0"/></svg><div class="a" style="left:686px;top:897px;width:40px;height:3px;background:#8cb4d8"></div><div class="a" style="left:731px;top:859px;width:44px;height:41px;background:#3a3f38"></div><svg class="a" style="left:743px;top:868px" width="25" height="21" viewBox="0 0 25 21"><rect x="7" y="1" width="17" height="19" rx="1.5" fill="#21a366"/><rect x="7" y="1" width="17" height="6.5" fill="#33c481"/><rect x="15" y="7.5" width="9" height="6" fill="#107c41"/><rect x="0" y="4" width="13" height="13" rx="1.5" fill="#107c41"/><path d="M3.5 7.5l6 6M9.5 7.5l-6 6" stroke="#fff" stroke-width="1.8"/></svg><div class="a" style="left:731px;top:897px;width:44px;height:3px;background:#8cb4d8"></div><div class="a" style="left:777px;top:862px;width:1px;height:36px;background:#3a3f38"></div><svg class="a" style="left:792px;top:868px" width="23" height="22" viewBox="0 0 23 22"><rect x="0.5" y="0.5" width="22" height="21" rx="2.5" fill="#c8161d"/><path d="M4.5 16c3-3 6-9 6.5-12 .3-1.5-1-1.5-1-.3 0 3 3.5 8.5 8 9.5 1.5.3 1.2-1.2-.3-1.2-3 0-8 2-11.5 4.5-1 .8-.5 1.5 1 .5z" fill="none" stroke="#fff" stroke-width="1.5"/></svg><div class="a" style="left:783.5px;top:897px;width:40px;height:3px;background:#8cb4d8"></div><svg class="a" style="left:1227px;top:876px" width="13" height="9" viewBox="0 0 13 9"><path d="M1 8l5.5-6.5L12 8" fill="none" stroke="#fff" stroke-width="1.4"/></svg><svg class="a" style="left:1251px;top:872px" width="13" height="16" viewBox="0 0 13 16"><rect x="1" y="5" width="8" height="6" rx="1" fill="none" stroke="#fff" stroke-width="1.2"/><path d="M9 7l3-2v6l-3-2" fill="none" stroke="#fff" stroke-width="1.2"/><path d="M2 3a6 6 0 0 1 8 0M2 13a6 6 0 0 0 8 0" fill="none" stroke="#fff" stroke-width="1.1"/></svg><svg class="a" style="left:1273px;top:872px" width="17" height="16" viewBox="0 0 17 16"><path d="M1 6h3l4-4v12l-4-4H1z" fill="none" stroke="#fff" stroke-width="1.2"/><path d="M10 5.5a3.5 3.5 0 0 1 0 5M12 3.5a6 6 0 0 1 0 9M14 2a8 8 0 0 1 0 12" fill="none" stroke="#bbb" stroke-width="1.1"/></svg><svg class="a" style="left:1296px;top:872px" width="18" height="16" viewBox="0 0 18 16"><rect x="3" y="1" width="14" height="10" fill="none" stroke="#fff" stroke-width="1.2"/><path d="M10 11v3M6 14.5h8" stroke="#fff" stroke-width="1.2"/><rect x="0.5" y="4" width="4" height="7" fill="#1f241e" stroke="#fff" stroke-width="1"/></svg><div class="t" style="left:1337.50px;top:865.21px;font-size:12px;color:#fff;transform:scaleX(0.9157);">09.00</div><div class="t" style="left:1322.97px;top:881.96px;font-size:12px;color:#fff;transform:scaleX(0.9698);">31/01/2026</div><svg class="a" style="left:1398px;top:872px" width="18" height="17" viewBox="0 0 18 17"><path d="M1 1h16v11H10l-3 4v-4H1z" fill="#fff"/><path d="M4 4.5h10M4 7h10M4 9.5h6" stroke="#1f241e" stroke-width="1"/></svg><div class="a" style="left:1435px;top:860px;width:1px;height:40px;background:#555"></div></body></html>
